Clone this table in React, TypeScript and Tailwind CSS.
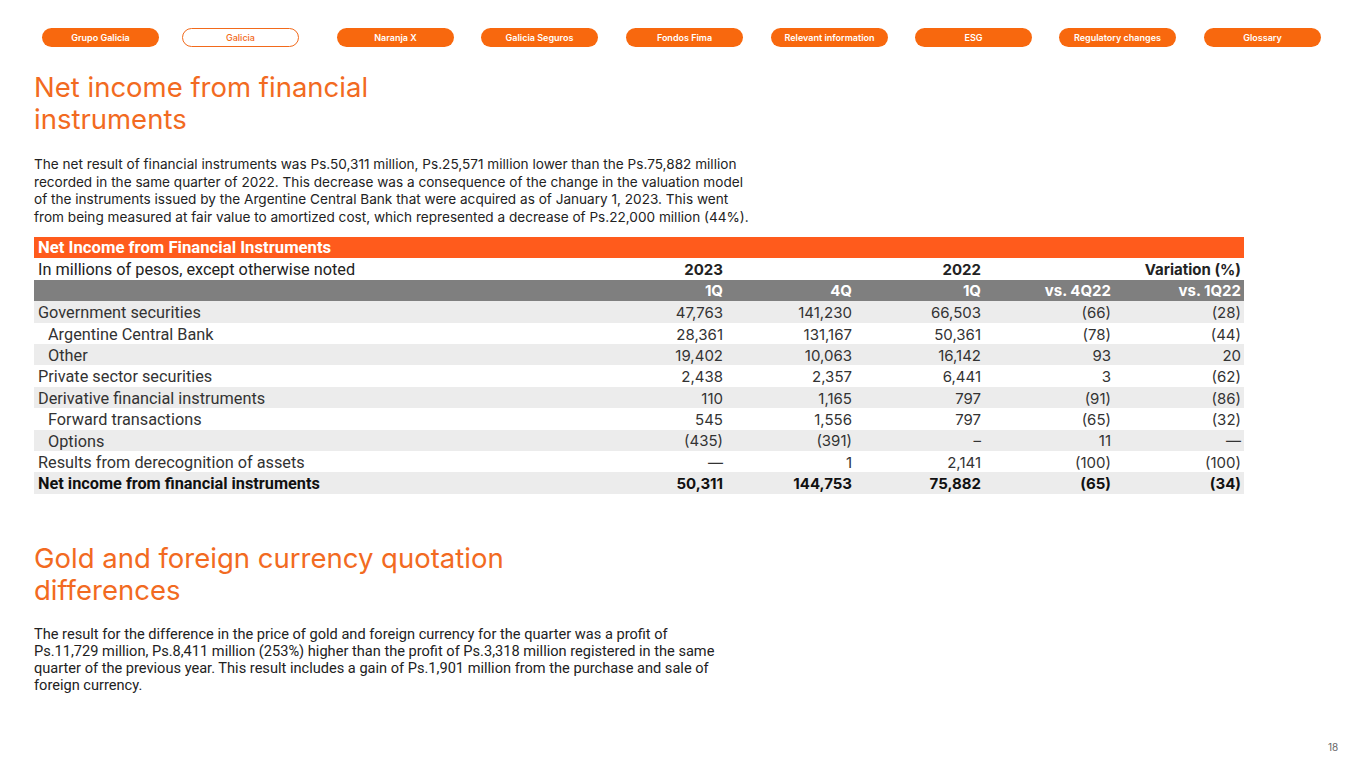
import React from 'react';

// left margin of each pill, so the row lands where the slide puts it
const tabs = [
  { name: 'Grupo Galicia', ml: 'ml-0' },
  { name: 'Galicia', ml: 'ml-[23px]' },
  { name: 'Naranja X', ml: 'ml-[38px]' },
  { name: 'Galicia Seguros', ml: 'ml-[27px]' },
  { name: 'Fondos Fima', ml: 'ml-[28px]' },
  { name: 'Relevant information', ml: 'ml-[28px]' },
  { name: 'ESG', ml: 'ml-[27px]' },
  { name: 'Regulatory changes', ml: 'ml-[27px]' },
  { name: 'Glossary', ml: 'ml-[28px]' },
];

type Row = {
  label: string;
  values: string[];
  indent?: boolean;
  bold?: boolean;
  shade?: boolean;
};

const rows: Row[] = [
  { label: 'Government securities', values: ['47,763', '141,230', '66,503', '(66)', '(28)'], shade: true },
  { label: 'Argentine Central Bank', values: ['28,361', '131,167', '50,361', '(78)', '(44)'], indent: true },
  { label: 'Other', values: ['19,402', '10,063', '16,142', '93', '20'], indent: true, shade: true },
  { label: 'Private sector securities', values: ['2,438', '2,357', '6,441', '3', '(62)'] },
  { label: 'Derivative financial instruments', values: ['110', '1,165', '797', '(91)', '(86)'], shade: true },
  { label: 'Forward transactions', values: ['545', '1,556', '797', '(65)', '(32)'], indent: true },
  { label: 'Options', values: ['(435)', '(391)', '–', '11', '—'], indent: true, shade: true },
  { label: 'Results from derecognition of assets', values: ['—', '1', '2,141', '(100)', '(100)'] },
  { label: 'Net income from financial instruments', values: ['50,311', '144,753', '75,882', '(65)', '(34)'], bold: true, shade: true },
];

const grid = 'grid grid-cols-[563px_129px_129px_129px_130px_130px] h-[21.4px] items-center';

export default function App() {
  return (
    <div className="w-[1365px] h-[768px] bg-white relative overflow-hidden font-['Inter',sans-serif] text-[#222]">
      {/* Nav */}
      <div className="flex pt-[28px] pl-[42px]">
        {tabs.map((t) =>
          t.name === 'Galicia' ? (
            <div
              key={t.name}
              className={`${t.ml} w-[117px] h-[19px] rounded-full border-[1.5px] border-[#f26a1b] bg-white text-[#f26a1b] text-[9px] font-medium flex items-center justify-center`}
            >
              {t.name}
            </div>
          ) : (
            <div
              key={t.name}
              className={`${t.ml} w-[117px] h-[19px] rounded-full bg-[#f8680e] text-white text-[9px] font-semibold flex items-center justify-center`}
            >
              {t.name}
            </div>
          )
        )}
      </div>

      <div className="px-[34px]">
        <h1 className="mt-[24px] w-[380px] text-[27.5px] leading-[32px] text-[#f26a21] font-normal">
          Net income from financial instruments
        </h1>

        <p className="mt-[21px] text-[13.6px] leading-[17.5px] text-[#222]">
          The net result of financial instruments was Ps.50,311 million, Ps.25,571 million lower than the Ps.75,882 million
          <br />
          recorded in the same quarter of 2022. This decrease was a consequence of the change in the valuation model
          <br />
          of the instruments issued by the Argentine Central Bank that were acquired as of January 1, 2023. This went
          <br />
          from being measured at fair value to amortized cost, which represented a decrease of Ps.22,000 million (44%).
        </p>

        {/* Table */}
        <div className="mt-[11px] w-[1210px] text-[15px]">
          <div className="h-[21.4px] bg-[#ff5b1c] flex items-center pl-[4px] font-['Roboto',sans-serif] font-bold text-[16.7px] text-white">
            Net Income from Financial Instruments
          </div>
          <div className={grid}>
            <div className="pl-[4px] font-['Roboto',sans-serif] text-[16.3px]">In millions of pesos, except otherwise noted</div>
            <div className="text-right pr-[3px] font-bold">2023</div>
            <div />
            <div className="text-right pr-[3px] font-bold">2022</div>
            <div />
            <div className="text-right pr-[3px] font-bold">Variation (%)</div>
          </div>
          <div className={`${grid} bg-[#7f7f7f] text-white font-bold`}>
            <div />
            <div className="text-right pr-[3px]">1Q</div>
            <div className="text-right pr-[3px]">4Q</div>
            <div className="text-right pr-[3px]">1Q</div>
            <div className="text-right pr-[3px]">vs. 4Q22</div>
            <div className="text-right pr-[3px]">vs. 1Q22</div>
          </div>
          {rows.map((r) => (
            <div key={r.label} className={`${grid} ${r.shade ? 'bg-[#ececec]' : 'bg-white'} ${r.bold ? 'font-bold text-[#111]' : 'text-[#333]'}`}>
              <div className={`font-['Roboto',sans-serif] text-[16.3px] ${r.indent ? 'pl-[14px]' : 'pl-[4px]'}`}>{r.label}</div>
              {r.values.map((v, i) => (
                <div key={i} className="text-right pr-[3px]">
                  {v}
                </div>
              ))}
            </div>
          ))}
        </div>

        <h2 className="mt-[48px] w-[520px] text-[27.5px] leading-[32px] text-[#f26a21] font-normal">
          Gold and foreign currency quotation differences
        </h2>

        <p className="mt-[20px] text-[14.6px] leading-[17px] text-[#222] font-['Roboto',sans-serif]">
          The result for the difference in the price of gold and foreign currency for the quarter was a profit of
          <br />
          Ps.11,729 million, Ps.8,411 million (253%) higher than the profit of Ps.3,318 million registered in the same
          <br />
          quarter of the previous year. This result includes a gain of Ps.1,901 million from the purchase and sale of
          <br />
          foreign currency.
        </p>
      </div>

      <div className="absolute left-[1328px] top-[740px] text-[10px] text-[#666]">18</div>
    </div>
  );
}
